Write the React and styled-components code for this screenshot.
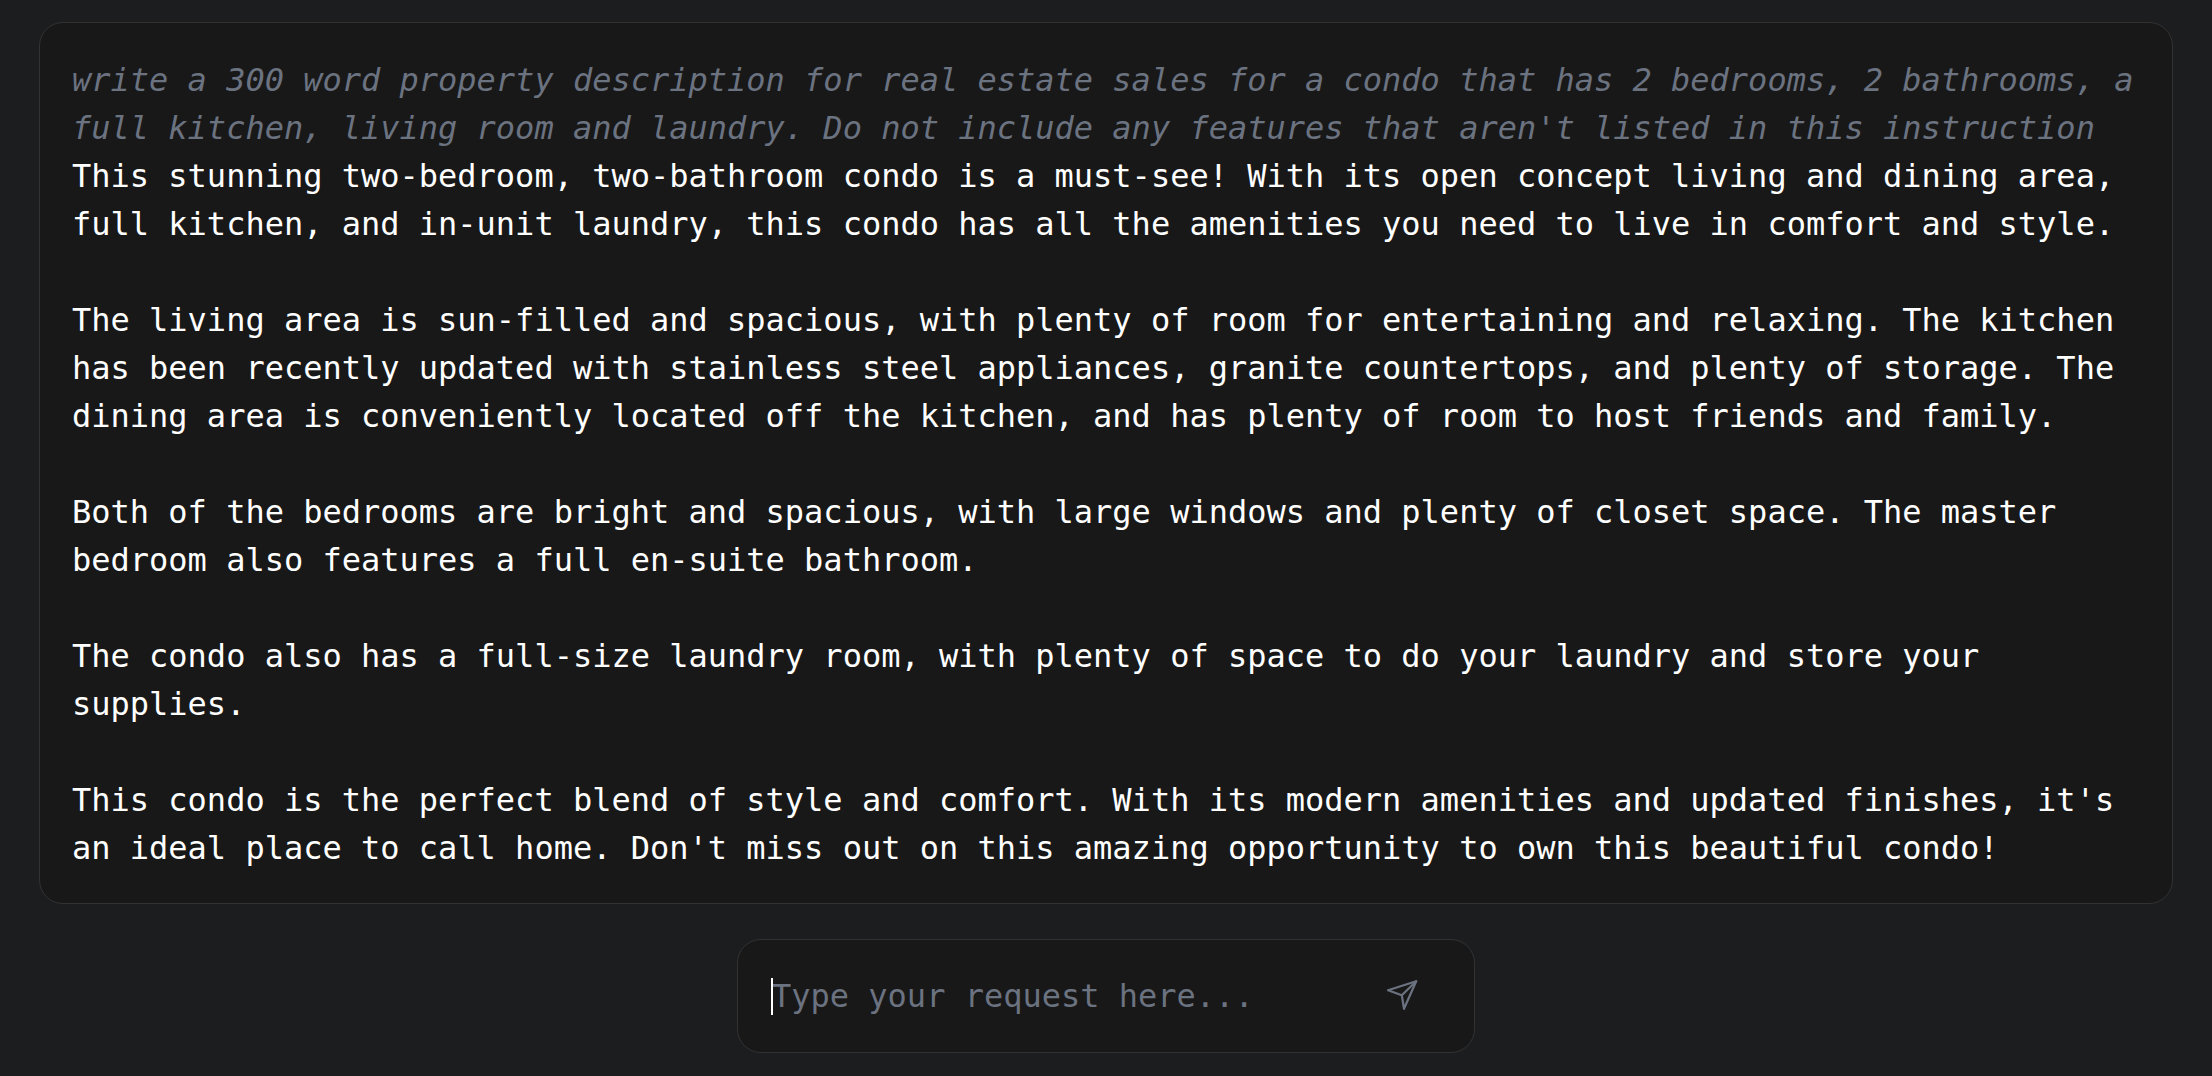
import React from "react";
import styled, { createGlobalStyle } from "styled-components";

const Global = createGlobalStyle`
  html, body { margin: 0; padding: 0; background: #1c1d1f; }
  body { font-family: "DejaVu Sans Mono", "Liberation Mono", monospace; }
  * { box-sizing: border-box; }
`;

const Page = styled.div`
  display: flex;
  flex-direction: column;
  align-items: center;
  padding: 22px 39px 23px;
  gap: 35px;
  min-height: 1076px;
  background: #1c1d1f;
`;

const Card = styled.div`
  align-self: stretch;
  background: #181818;
  border: 1px solid #323232;
  border-radius: 24px;
  padding: 33px 32px 31px;
  font-size: 32px;
  line-height: 48px;
`;

const Prompt = styled.div`
  color: #6b7280;
  font-style: italic;
`;

const Response = styled.div`
  color: #ffffff;
  white-space: pre-wrap;
`;

const InputBox = styled.div`
  position: relative;
  width: 738px;
  height: 114px;
  display: flex;
  align-items: center;
  background: #181818;
  border: 1px solid #323232;
  border-radius: 24px;
  padding: 0 56px 0 34px;
`;

const Field = styled.input`
  flex: 1;
  min-width: 0;
  background: transparent;
  border: none;
  outline: none;
  padding: 0;
  font-family: "DejaVu Sans Mono", "Liberation Mono", monospace;
  font-size: 32px;
  line-height: 48px;
  color: #ffffff;
  &::placeholder { color: #6b7280; opacity: 1; }
`;

const Caret = styled.span`
  position: absolute;
  left: 33px;
  top: 38px;
  width: 2px;
  height: 37px;
  background: #ffffff;
`;

const SendButton = styled.button`
  display: flex;
  align-items: center;
  justify-content: center;
  flex: none;
  background: transparent;
  border: none;
  padding: 0;
  width: 32px;
  height: 32px;
  margin-top: -2px;
  color: #6b7280;
  cursor: pointer;
`;

const SendIcon = () => (
  <svg width="32" height="32" viewBox="0 0 32 32" fill="none" stroke="currentColor" strokeWidth="2.2" strokeLinecap="round" strokeLinejoin="round">
    <path d="M30.2 2.2 L2 11.2 L15.8 16.2 L18 29.8 Z" />
    <path d="M30.2 2.2 L15.8 16.2" />
  </svg>
);

const responseText = `This stunning two-bedroom, two-bathroom condo is a must-see! With its open concept living and dining area, full kitchen, and in-unit laundry, this condo has all the amenities you need to live in comfort and style.

The living area is sun-filled and spacious, with plenty of room for entertaining and relaxing. The kitchen has been recently updated with stainless steel appliances, granite countertops, and plenty of storage. The dining area is conveniently located off the kitchen, and has plenty of room to host friends and family.

Both of the bedrooms are bright and spacious, with large windows and plenty of closet space. The master bedroom also features a full en-suite bathroom.

The condo also has a full-size laundry room, with plenty of space to do your laundry and store your supplies.

This condo is the perfect blend of style and comfort. With its modern amenities and updated finishes, it's an ideal place to call home. Don't miss out on this amazing opportunity to own this beautiful condo!`;

export default function App() {
  return (
    <>
      <Global />
      <Page>
        <Card>
          <Prompt>
            write a 300 word property description for real estate sales for a condo that has 2 bedrooms, 2 bathrooms, a full kitchen, living room and laundry. Do not include any features that aren't listed in this instruction
          </Prompt>
          <Response>{responseText}</Response>
        </Card>
        <InputBox>
          <Caret />
          <Field placeholder="Type your request here..." />
          <SendButton aria-label="Send">
            <SendIcon />
          </SendButton>
        </InputBox>
      </Page>
    </>
  );
}
